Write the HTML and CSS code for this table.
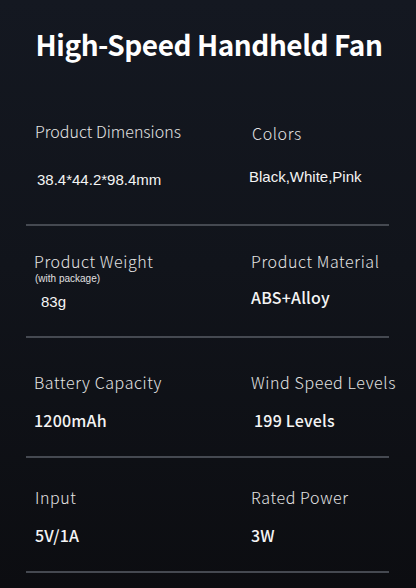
FILE: index.html
```html
<!DOCTYPE html>
<html lang="en">
<head>
<meta charset="utf-8">
<title>High-Speed Handheld Fan</title>
<link rel="stylesheet" href="styles.css">
</head>
<body>
<main class="page">
  <header class="header">
    <h1 class="title">High-Speed Handheld Fan</h1>
  </header>
  <section class="specs">
    <div class="row row-1">
      <div class="cell">
        <div class="label l-dim">Product Dimensions</div>
        <div class="value value-arial v-dim">38.4*44.2*98.4mm</div>
      </div>
      <div class="cell">
        <div class="label l-colors">Colors</div>
        <div class="value value-arial v-colors">Black,White,Pink</div>
      </div>
    </div>
    <div class="row row-2">
      <div class="cell">
        <div class="label">Product Weight</div>
        <div class="note">(with package)</div>
        <div class="value value-arial v-weight">83g</div>
      </div>
      <div class="cell">
        <div class="label">Product Material</div>
        <div class="value value-bold v-material">ABS+Alloy</div>
      </div>
    </div>
    <div class="row row-3">
      <div class="cell">
        <div class="label">Battery Capacity</div>
        <div class="value value-bold">1200mAh</div>
      </div>
      <div class="cell">
        <div class="label">Wind Speed Levels</div>
        <div class="value value-bold v-levels">199 Levels</div>
      </div>
    </div>
    <div class="row row-4">
      <div class="cell">
        <div class="label">Input</div>
        <div class="value value-bold">5V/1A</div>
      </div>
      <div class="cell">
        <div class="label">Rated Power</div>
        <div class="value value-bold">3W</div>
      </div>
    </div>
  </section>
</main>
</body>
</html>
```
FILE: styles.css
```css
* { box-sizing: border-box; }
html, body {
  margin: 0;
  padding: 0;
}
body {
  width: 416px;
  height: 588px;
  overflow: hidden;
  background: linear-gradient(180deg, #141821 0%, #11141b 45%, #0c0d11 100%);
  color: #ececec;
  font-family: "Noto Sans CJK SC", "Noto Sans", sans-serif;
}
.page {
  display: flex;
  flex-direction: column;
}
.header {
  height: 110px;
  padding-top: 26px;
  display: flex;
  justify-content: center;
}
.title {
  margin: 0 0 0 2px;
  font-size: 28px;
  line-height: 36px;
  font-weight: 700;
  color: #ffffff;
  letter-spacing: -0.45px;
}
.specs {
  padding: 0 27px 0 26px;
  display: flex;
  flex-direction: column;
}
.row {
  display: grid;
  grid-template-columns: 225px 1fr;
  border-bottom: 2px solid #454951;
}
.cell {
  display: flex;
  flex-direction: column;
  align-items: flex-start;
}
.cell:first-child { padding-left: 8px; }
.label {
  font-size: 16px;
  line-height: 20px;
  font-weight: 300;
  letter-spacing: 0.6px;
  color: #e4e4e4;
  white-space: nowrap;
}
.label.l-dim { letter-spacing: 0; margin-left: 1px; }
.note {
  font-family: "Liberation Sans", Arial, sans-serif;
  font-size: 10px;
  line-height: 12px;
  color: #e0e0e0;
  margin-top: 2px;
  margin-left: 1px;
}
.value { white-space: nowrap; color: #f4f4f4; }
.value-arial {
  font-family: "Liberation Sans", Arial, sans-serif;
  font-size: 15px;
  line-height: 18px;
}
.value-bold {
  font-size: 16px;
  line-height: 20px;
  font-weight: 500;
  letter-spacing: 0.2px;
}

.row-1 { height: 116px; padding-top: 11px; }
.row-1 .value { margin-top: 30px; }
.row-1 .l-colors { margin-top: 2px; margin-left: 1px; }
.row-1 .v-colors { margin-top: 25px; margin-left: -2px; }
.v-dim { margin-left: 3px; }

.row-2 { height: 112px; padding-top: 25px; }
.v-weight { margin-top: 8px; margin-left: 7px; }
.v-material { margin-top: 16px; }

.row-3 { height: 120px; padding-top: 34px; }
.row-3 .value { margin-top: 18px; }
.v-levels { margin-left: 3px; }

.row-4 { height: 115px; padding-top: 29px; }
.row-4 .value { margin-top: 18px; }
.row-4 .cell:first-child .value,
.row-4 .cell:first-child .label { margin-left: 1px; }
```
